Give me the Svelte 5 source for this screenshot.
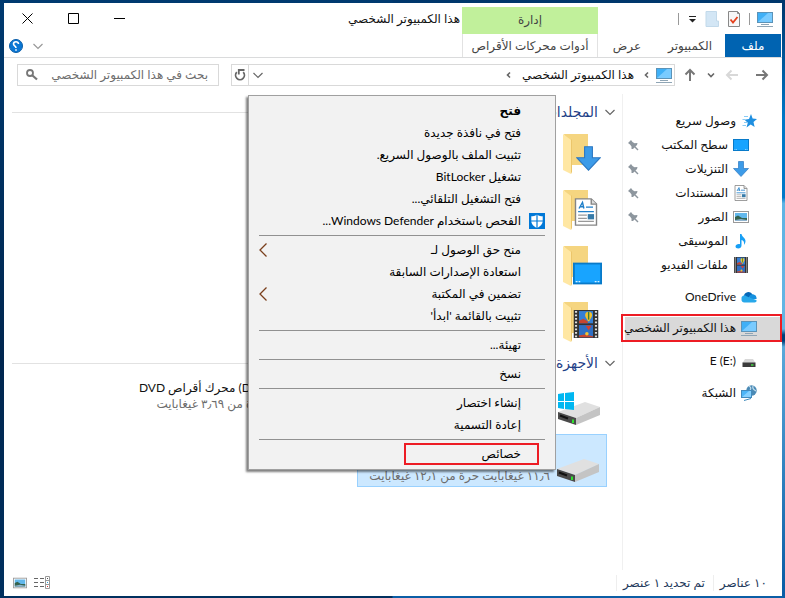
<script lang="ts">
	type Place = { icon: string; label: string; pinned?: boolean; root?: boolean; current?: boolean };
	type Command = { label: string; bold?: boolean; icon?: string; submenu?: boolean; marked?: boolean };

	const places: Place[] = [
		{ icon: 'star', label: 'وصول سريع', root: true },
		{ icon: 'desktop', label: 'سطح المكتب', pinned: true },
		{ icon: 'download', label: 'التنزيلات', pinned: true },
		{ icon: 'document', label: 'المستندات', pinned: true },
		{ icon: 'picture', label: 'الصور', pinned: true },
		{ icon: 'music', label: 'الموسيقى' },
		{ icon: 'video', label: 'ملفات الفيديو' },
		{ icon: 'cloud', label: 'OneDrive', root: true },
		{ icon: 'pc', label: 'هذا الكمبيوتر الشخصي', root: true, current: true },
		{ icon: 'usb', label: 'E (E:)', root: true },
		{ icon: 'network', label: 'الشبكة', root: true },
	];

	const groups: Command[][] = [
		[
			{ label: 'فتح', bold: true },
			{ label: 'فتح في نافذة جديدة' },
			{ label: 'تثبيت الملف بالوصول السريع.' },
			{ label: 'تشغيل BitLocker' },
			{ label: 'فتح التشغيل التلقائي...' },
			{ label: 'الفحص باستخدام Windows Defender...', icon: 'defender' },
		],
		[
			{ label: 'منح حق الوصول لـ', submenu: true },
			{ label: 'استعادة الإصدارات السابقة' },
			{ label: 'تضمين في المكتبة', submenu: true },
			{ label: "تثبيت بالقائمة 'ابدأ'" },
		],
		[{ label: 'تهيئة...' }],
		[{ label: 'نسخ' }],
		[{ label: 'إنشاء اختصار' }, { label: 'إعادة التسمية' }],
		[{ label: 'خصائص', marked: true }],
	];

	const folders = ['download', 'document', 'desktop', 'video'];

	let search = $state('');
</script>

{#snippet icon(name: string)}
	<svg class="icon" viewBox="0 0 16 16" aria-hidden="true">
		{#if name === 'pc'}
			<rect x="0.5" y="1.5" width="15" height="10" fill="#3fb0f7" stroke="#5b93b8" />
			<path d="M1 11 11 2H15V11Z" fill="#79cbff" />
			<path d="M4 13.5H12M0 15.5H16" stroke="#8fa5b5" />
		{:else if name === 'star'}
			<path d="M10 1 11.6 5.5 16 6 12.5 9 13.6 14 9.7 11.4 5.5 14.5 6.8 9.7 3.5 6.8 8 6Z" fill="#1f8fe0" />
			<path d="M3 3.5H7M1.5 6.5H4M3 9.5H6M1.5 12.5H5" stroke="#8accf5" />
		{:else if name === 'desktop'}
			<rect x="0.5" y="2.5" width="15" height="11" fill="#18a4ff" stroke="#087ac9" />
			<path d="M1.5 12.5H4M12 12.5H14.5" stroke="#d6f0ff" stroke-width="0.6" stroke-dasharray="1 0.6" />
		{:else if name === 'download'}
			<path d="M5.5 0.5H10.5V7.5H15.5L8 15.5 0.5 7.5H5.5Z" fill="#3c9be8" stroke="#2d78c2" stroke-width="0.7" />
		{:else if name === 'document'}
			<path d="M2 0.5H11L14 3.5V15.5H2Z" fill="#fff" stroke="#858585" stroke-width="0.8" />
			<path d="M11 0.5V3.5H14" fill="#ddd" stroke="#858585" stroke-width="0.8" />
			<path d="M4 6 6 2.5 6.8 6M4.8 5H6.8M8 5.2H12M3.5 7.8H12.5" fill="none" stroke="#1f7fc9" stroke-width="0.8" />
			<path d="M3.5 9.8H8.5M3.5 11.6H8.5M3.5 13.4H12.5" stroke="#999" stroke-width="0.7" />
			<rect x="9" y="9.2" width="3.6" height="3" fill="#367aa8" />
		{:else if name === 'picture'}
			<rect x="0.5" y="2.5" width="15" height="11" fill="#fff" stroke="#999" />
			<rect x="2" y="4" width="12" height="8" fill="#62b8ec" />
			<path d="M2 8 5 6.5 9 9 14 9V12H2Z" fill="#35634f" />
			<path d="M2 11 8 10 14 11V12H2Z" fill="#8fb4d0" />
		{:else if name === 'music'}
			<path d="M7 1H8.5C9 4 12.5 5 12.5 8 12.5 10 11.5 11 11 12 11.5 9 10.5 7.5 8.5 7V12.5C8.5 14.5 7 15.5 5.2 15.5 3.6 15.5 2.5 14.7 2.5 13.5 2.5 12 4 11 5.7 11 6.2 11 6.7 11.1 7 11.3Z" fill="#179ff5" />
		{:else if name === 'video'}
			<rect x="1" y="0" width="14" height="16" fill="#333" />
			<path d="M2.3 0.5V16M13.7 0.5V16" stroke="#ddd" stroke-width="1.2" stroke-dasharray="1 1" />
			<rect x="4" y="0.6" width="8" height="7" fill="#357fd6" />
			<rect x="4" y="8.6" width="8" height="7" fill="#2e6fc4" />
			<path d="M4 6.2 6.5 5 9 6.4V7.6H4ZM4 15.6V14.6L7 14 12 15V15.6Z" fill="#c8452f" />
			<path d="M9.5 1A2 2 0 0 1 11.5 3C11.5 4.2 10.2 5.2 9.9 6.4H9.1C8.8 5.2 7.5 4.2 7.5 3A2 2 0 0 1 9.5 1Z" fill="#f3c32f" />
			<path d="M9.5 1V5.5" stroke="#3a7a3a" stroke-width="0.8" />
			<path d="M7.8 9H11.2L9.5 11.5Z" fill="#d3412f" />
			<circle cx="8.5" cy="13.5" r="1" fill="#f3c32f" />
		{:else if name === 'cloud'}
			<path d="M3 8A4.5 4.5 0 0 1 11.5 5.5L7 10Z" fill="#0568b8" />
			<path d="M8 7.5A4 4 0 0 1 15.5 10L9 11Z" fill="#1490df" />
			<path d="M0.5 10A3 3 0 0 1 5.5 7.2L15.8 11.5A2.3 2.3 0 0 1 13.5 13.5H3.5A3.2 3.2 0 0 1 0.5 10Z" fill="#28a8ea" />
		{:else if name === 'usb'}
			<path d="M4 6H12L14.5 10H1.5Z" fill="#d8d8d8" />
			<rect x="1.5" y="9.5" width="13" height="4.5" fill="#3b3b3b" />
			<path d="M10 12H12.5" stroke="#42d442" stroke-width="1.5" />
		{:else if name === 'network'}
			<circle cx="10.5" cy="5.5" r="5.2" fill="#4b8ab5" />
			<path d="M8 1Q11 3 9 5M12 1Q11 4 15 6" fill="none" stroke="#c4dfef" stroke-width="1.2" />
			<rect x="0.5" y="5.5" width="10" height="7" fill="#4db5f7" stroke="#438bbd" />
			<path d="M1 12 8 6H10V12Z" fill="#85d0ff" />
			<path d="M3 15.5 10 13.5" stroke="#3e8abb" />
		{:else if name === 'check'}
			<path d="M2.5 0.5H11.5L13.5 2.5V15.5H2.5Z" fill="#f7f7f7" stroke="#888" />
			<path d="M11.5 0.5V2.5H13.5" fill="none" stroke="#888" />
			<path d="M4.5 8.5 7 11.5 11.5 6" fill="none" stroke="#e5401c" stroke-width="1.8" />
		{:else if name === 'blank'}
			<path d="M2 0.5H12.5V10H14.5V15.5H2Z" fill="#d3e6f5" stroke="#c2d9ea" />
		{:else if name === 'defender'}
			<rect width="16" height="16" fill="#0078d7" />
			<path d="M8 1.5C6 3 4 3.2 2.3 3.2V8C2.3 11.5 5 13.5 8 15 11 13.5 13.7 11.5 13.7 8V3.2C12 3.2 10 3 8 1.5Z" fill="#fff" />
			<path d="M8 1V15M2 8H14" stroke="#0078d7" stroke-width="1.2" />
		{:else if name === 'lens'}
			<circle cx="6" cy="6" r="3" fill="none" stroke="#777" stroke-width="1.8" />
			<path d="M8.2 8.2 13 12.5" stroke="#777" stroke-width="2.2" />
		{:else if name === 'refresh'}
			<path d="M11.2 5.2A4.4 4.4 0 1 1 4.8 5.2" fill="none" stroke="#666" stroke-width="1.8" />
			<path d="M12.5 3H6.8V7.5" fill="none" stroke="#666" stroke-width="1.8" />
		{:else if name === 'help'}
			<circle cx="8" cy="8" r="6.5" fill="#0a77d5" stroke="#0b5ea8" />
			<path d="M10.5 6A2.5 2.3 0 0 0 5.5 6C5.5 8 8 7.7 8 10M8 11.2V12.8" fill="none" stroke="#fff" stroke-width="1.6" />
		{:else if name === 'pin'}
			<path d="M3 6 6 3 7.5 5 9.5 6.2 12.5 6 12 8 8 12 6.5 12 6.5 9.5 5 7.5Z" fill="#8d969e" />
			<path d="M9.5 9.5 13 13" stroke="#8d969e" stroke-width="1.4" />
		{/if}
	</svg>
{/snippet}

{#snippet chevron(dir: string)}
	<svg class="chevron" viewBox="0 0 12 12" aria-hidden="true">
		{#if dir === 'down'}
			<path d="M1.5 4 6 8.5 10.5 4" />
		{:else if dir === 'down-small'}
			<path d="M3 4.5 6 7.5 9 4.5" stroke-width="1.6" />
		{:else}
			<path d="M7 3.5 4.5 6 7 8.5" stroke-width="1.6" />
		{/if}
	</svg>
{/snippet}

{#snippet drive(system: boolean)}
	<svg class="drive" viewBox="0 0 48 48" aria-hidden="true">
		<path d="M5 32 32 22 47 27 23 38Z" fill="#e0e0e0" />
		<path d="M23 38 47 27V35L23 45Z" fill="#c4c4c4" />
		<path d="M5 32 23 38V45L5 39Z" fill="#4a4a4a" />
		<path d="M7 35.5 15 38.5" stroke="#111" stroke-width="2" />
		<path d="M20 39.5V43" stroke="#2ee02e" stroke-width="2" />
		{#if system}
			<path d="M5 14 11 13V21H5ZM12 13 21 12V21H12ZM5 22H11V29L5 28ZM12 22H21V30L12 29Z" fill="#00b7f1" />
		{/if}
	</svg>
{/snippet}

<div class="window" dir="rtl">
	<header class="header">
		<div class="quick">
			{@render icon('pc')}
			<span class="bar"></span>
			<button aria-label="خصائص">{@render icon('check')}</button>
			<button aria-label="مجلد جديد">{@render icon('blank')}</button>
			<button class="more" aria-label="تخصيص">
				<svg viewBox="0 0 8 8"><path d="M1 1.5H8" stroke="#222" /><path d="M1 4H8L4.5 7.5Z" fill="#222" /></svg>
			</button>
			<span class="bar"></span>
		</div>
		<div class="manage">إدارة</div>
		<h1 class="title">هذا الكمبيوتر الشخصي</h1>
		<div class="controls">
			<button aria-label="تصغير"><svg viewBox="0 0 11 11"><path d="M0 5.5H11" /></svg></button>
			<button aria-label="تكبير"><svg viewBox="0 0 11 11"><path d="M0.5 0.5H10.5V10.5H0.5Z" /></svg></button>
			<button aria-label="إغلاق"><svg viewBox="0 0 11 11"><path d="M0.5 0.5 10.5 10.5M10.5 0.5 0.5 10.5" /></svg></button>
		</div>
	</header>

	<nav class="tabs">
		<div class="tab-list">
			<button class="tab file">ملف</button>
			<button class="tab computer">الكمبيوتر</button>
			<button class="tab view">عرض</button>
		</div>
		<button class="tab tools">أدوات محركات الأقراص</button>
		<div class="help">
			<button aria-label="توسيع الشريط">{@render chevron('down')}</button>
			<button aria-label="تعليمات">{@render icon('help')}</button>
		</div>
	</nav>

	<div class="toolbar">
		<div class="history">
			<button class="back" aria-label="رجوع"><svg viewBox="0 0 14 14"><path d="M1 7H12M7.5 2.5 12 7 7.5 11.5" stroke="#777" /></svg></button>
			<button aria-label="للأمام"><svg viewBox="0 0 14 14"><path d="M13 7H2M6.5 2.5 2 7 6.5 11.5" stroke="#d8d8d8" /></svg></button>
			<button class="recent" aria-label="الأخيرة">{@render chevron('down-small')}</button>
			<button aria-label="لأعلى"><svg viewBox="0 0 14 14"><path d="M7 13V2M2.5 6.5 7 2 11.5 6.5" stroke="#777" /></svg></button>
		</div>
		<div class="address">
			{@render icon('pc')}
			{@render chevron('left')}
			<span class="crumb">هذا الكمبيوتر الشخصي</span>
			{@render chevron('left')}
			<button class="drop" aria-label="المواقع السابقة">{@render chevron('down')}</button>
			<button class="refresh" aria-label="تحديث">{@render icon('refresh')}</button>
		</div>
		<div class="search">
			<input type="text" aria-label="بحث" placeholder="بحث في هذا الكمبيوتر الشخصي" bind:value={search} />
			{@render icon('lens')}
		</div>
	</div>

	<div class="body">
		<aside class="sidebar">
			{#each places as p}
				<a href="#top" class="place" class:root={p.root} class:current={p.current}>
					{@render icon(p.icon)}
					<span class="place-label">{p.label}</span>
					{#if p.pinned}{@render icon('pin')}{/if}
				</a>
			{/each}
		</aside>

		<main class="content">
			<section class="folders">
				<h2 class="group">{@render chevron('down')}<span>المجلدات</span></h2>
				{#each folders as f}
					<div class="folder">
						<svg class="folder-back" viewBox="0 0 48 48" aria-hidden="true">
							<path d="M5 4H29V35H12Z" fill="#f5d580" />
							<path d="M4 4 12 10V44L4 40Z" fill="#ffe7a3" />
							<path d="M12 10 13 9V42L12 44Z" fill="#ecc66b" />
						</svg>
						<span class="overlay {f}">{@render icon(f)}</span>
					</div>
				{/each}
			</section>

			<section>
				<h2 class="group">{@render chevron('down')}<span>الأجهزة</span></h2>
				<div class="tiles">
					<div class="tile">{@render drive(true)}</div>
					<div class="tile dvd">
						<p><bdi dir="ltr">(D:)</bdi> محرك أقراص DVD</p>
						<p class="free">٠ بايت حرة من ٣٫٦٩ غيغابايت</p>
					</div>
					<div class="tile selected">
						{@render drive(false)}
						<p class="free">١١٫٦ غيغابايت حرة من ١٢٫١ غيغابايت</p>
					</div>
				</div>
			</section>
		</main>
	</div>

	<footer class="status">
		<span class="count">١٠ عناصر</span>
		<span class="count">تم تحديد ١ عنصر</span>
		<div class="views">
			<button aria-label="تفاصيل">
				<svg viewBox="0 0 16 14">
					<path d="M0 2.5H4M6 2.5H10M0 6.5H4M6 6.5H10M0 10.5H4M6 10.5H10" stroke="#666" />
					<path d="M11.5 0.5H15.5V12.5H11.5ZM11.5 4.5H15.5M11.5 8.5H15.5" fill="none" stroke="#999" />
					<path d="M13 2.5H14" stroke="#555" /><path d="M13 6.5H14" stroke="#2aa6dd" /><path d="M13 10.5H14" stroke="#d33" />
				</svg>
			</button>
			<button aria-label="رموز كبيرة">{@render icon('picture')}</button>
		</div>
	</footer>

	<div class="menu" role="menu">
		{#each groups as group}
			<div class="menu-group">
				{#each group as c}
					<button role="menuitem" class="command" class:bold={c.bold} class:marked={c.marked}>
						<span class="gutter">{#if c.icon}{@render icon(c.icon)}{/if}</span>
						<span class="command-label">{c.label}</span>
						{#if c.submenu}
							<svg class="arrow" viewBox="0 0 8 14"><path d="M7.5 0.5 1 7 7.5 13.5" fill="none" stroke="#7a3f1c" stroke-width="1.3" /></svg>
						{/if}
					</button>
				{/each}
			</div>
		{/each}
	</div>
</div>

<style>
	:global(body) {
		margin: 0;
		background: linear-gradient(to bottom, #003a70, #00264f 60%, #00305f) left / 50% 100% no-repeat,
			linear-gradient(to bottom, #00366b, #0078c8 20%, #0078c8 33%, #5fb4e4 34%, #64b5e3 55%, #003e78 56%, #003e78 57%, #5aa9da 58%, #0b5ea6 98%);
	}
	:global(#app) {
		padding: 3px 3px 2px 4px;
	}
	.window {
		position: relative;
		display: flex;
		flex-direction: column;
		min-height: calc(100vh - 5px);
		background: #fff;
		color: #111;
		font-family: Lato, 'DejaVu Sans', sans-serif;
		font-size: 12px;
		line-height: 16px;
	}
	button {
		display: flex;
		align-items: center;
		justify-content: center;
		padding: 0;
		border: 0;
		background: none;
		color: inherit;
		font: inherit;
		white-space: nowrap;
	}
	h1, h2, p { margin: 0; font-weight: normal; }
	.icon { width: 16px; height: 16px; flex: none; }
	.chevron {
		width: 12px;
		height: 12px;
		flex: none;
		fill: none;
		stroke: #666;
		stroke-width: 1.2;
	}

	.header, .tabs {
		display: grid;
		grid-template-columns: 184px 136px 1fr auto;
	}
	.header { height: 31px; }
	.quick {
		display: flex;
		align-items: center;
		gap: 6px;
		padding-right: 9px;
	}
	.bar { width: 1px; height: 12px; margin: 0 1px; background: #999; }
	.more { width: 12px; }
	.more svg { width: 8px; height: 8px; }
	.manage {
		margin-top: 4px;
		background: #c1f09b;
		color: #444;
		line-height: 26px;
		text-align: center;
	}
	.title {
		padding: 8px 2px 0 0;
		font-size: 12px;
		white-space: nowrap;
	}
	.controls { display: flex; }
	.controls button { width: 46px; }
	.controls svg { width: 11px; height: 11px; fill: none; stroke: #000; }

	.tabs {
		height: 23px;
		border-bottom: 1px solid #dadbdc;
	}
	.tab-list { display: flex; }
	.tab { color: #444; }
	.file { width: 56px; margin-right: 1px; background: #0063b1; color: #fff; }
	.computer { width: 70px; }
	.view { width: 56px; }
	.tools { border-right: 1px solid #e2e2e2; border-left: 1px solid #e2e2e2; }
	.help {
		grid-column: 3 / 5;
		display: flex;
		justify-content: flex-end;
		gap: 8px;
		padding-left: 4px;
	}
	.help .chevron { stroke: #999; }

	.toolbar {
		display: flex;
		gap: 8px;
		padding: 6px 13px 8px;
	}
	.history { display: flex; align-items: center; gap: 8px; }
	.history svg { width: 14px; height: 14px; fill: none; stroke-width: 2; }
	.history .back { margin-left: 8px; }
	.history .recent svg { width: 12px; height: 12px; }
	.address {
		flex: 1;
		display: flex;
		align-items: center;
		height: 20px;
		border: 1px solid #d9d9d9;
		padding-right: 2px;
		gap: 3px;
	}
	.crumb { padding: 0 4px; }
	.address .drop { margin-right: auto; }
	.refresh { width: 17px; height: 20px; border-right: 1px solid #d9d9d9; }
	.search {
		display: flex;
		align-items: center;
		width: 27%;
		max-width: 200px;
		height: 20px;
		margin-right: 4px;
		border: 1px solid #d9d9d9;
	}
	.search input {
		flex: 1;
		min-width: 0;
		padding: 0 10px 0 0;
		border: 0;
		background: none;
		font: inherit;
	}
	.search input::placeholder { color: #6d6d6d; opacity: 1; }
	.search .icon { margin: 0 8px 0 6px; }

	.body { flex: 1; display: flex; }
	.sidebar {
		width: 159px;
		padding-top: 15px;
		border-left: 1px solid #f0f0f0;
	}
	.place {
		display: flex;
		align-items: center;
		height: 24px;
		gap: 5px;
		padding: 0 33px 0 2px;
		color: #111;
		text-decoration: none;
		white-space: nowrap;
	}
	.place.root { margin-bottom: 8px; padding-right: 25px; }
	.place.root:first-child { margin-bottom: 0; }
	.place:nth-child(7) { margin-bottom: 8px; }
	.place-label { flex: 1; }
	.place.current {
		box-sizing: border-box;
		height: 28px;
		margin: -3px 0 7px -2px;
		padding: 0 23px 0 0;
		border: 2px solid #ed1c24;
		background: #d9d9d9;
		box-shadow: inset 2px 1px #fff;
	}

	.content { flex: 1; padding: 9px 15px 0 8px; }
	.folders { height: 251px; }
	.group {
		display: flex;
		align-items: center;
		gap: 6px;
		height: 18px;
		margin-right: -9px;
		color: #1f3f87;
		font-size: 14px;
		white-space: nowrap;
	}
	.group::after { content: ''; flex: 1; height: 1px; background: #e2e2e2; }
	.folder {
		position: relative;
		width: 48px;
		height: 48px;
		margin: 8px 0;
	}
	.group + .folder { margin-top: 9px; }
	.folder-back { width: 48px; height: 48px; }
	.overlay { position: absolute; left: 17px; bottom: 7px; width: 25px; height: 25px; }
	.overlay .icon { width: 100%; height: 100%; }
	.overlay.document, .overlay.video { left: 13px; bottom: 8px; width: 28px; height: 28px; }
	.overlay.desktop { left: 14px; bottom: 2px; width: 29px; height: 29px; }

	.tiles {
		display: grid;
		grid-template-columns: 250px 250px;
		grid-auto-rows: 53px;
		gap: 3px 0;
		padding-top: 6px;
	}
	.tile {
		display: flex;
		flex-direction: column;
		justify-content: flex-end;
		position: relative;
		box-sizing: border-box;
		padding-right: 56px;
		white-space: nowrap;
	}
	.dvd { justify-content: flex-start; padding-top: 2px; }
	.dvd p:first-child { padding-right: 44px; }
	.free { color: #6d6d6d; }
	.drive { position: absolute; right: 6px; top: 2px; width: 48px; height: 48px; }
	.selected { padding-bottom: 2px; background: #cce8ff; border: 1px solid #99d1ff; }

	.status {
		display: flex;
		align-items: center;
		gap: 8px;
		height: 26px;
		padding: 0 15px 0 8px;
		color: #1e395b;
	}
	.count { padding-left: 6px; border-left: 1px solid #eee; }
	.views { display: flex; gap: 6px; margin-right: auto; }
	.views svg { width: 16px; height: 14px; }

	.menu {
		position: absolute;
		top: 92px;
		left: 244px;
		box-sizing: border-box;
		width: 308px;
		padding: 4px 0;
		background: #f2f2f2;
		border: 1px solid #a0a0a0;
		box-shadow: -2px 2px 2px rgba(0, 0, 0, 0.5);
	}
	.menu-group + .menu-group::before {
		content: '';
		display: block;
		height: 1px;
		margin: 3px 10px;
		background: #919191;
	}
	.command {
		position: relative;
		justify-content: flex-start;
		width: 100%;
		height: 22px;
		color: #000;
	}
	.gutter { display: flex; width: 34px; padding-right: 10px; box-sizing: border-box; }
	.command-label { flex: 1; text-align: right; }
	.bold { font-weight: bold; }
	.arrow { width: 8px; height: 14px; margin-left: 10px; }
	.marked::after {
		content: '';
		position: absolute;
		inset: 0 16px 0 155px;
		border: 2px solid #ed1c24;
	}
</style>
